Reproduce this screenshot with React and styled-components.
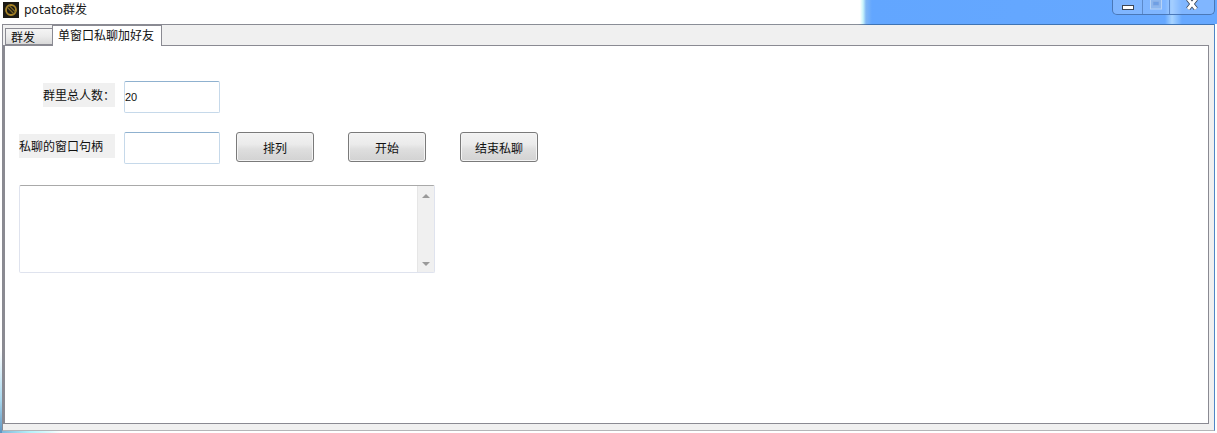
import React from 'react'
import styled, { createGlobalStyle } from 'styled-components'

const GlobalStyle = createGlobalStyle`
  html, body {
    margin: 0;
    padding: 0;
    background: #fff;
  }
  body {
    font-family: "Noto Sans CJK SC", "Liberation Sans", sans-serif;
    font-size: 12px;
    color: #111;
  }
`

const Page = styled.div`
  width: 1217px;
  height: 433px;
  overflow: hidden;
  display: flex;
  flex-direction: column;
  background:
    linear-gradient(to bottom, #fff 0, #fff 350px, #a9d8ee 400px, #5f94c0 100%) left top / 2px 100% no-repeat,
    linear-gradient(to right, #7fb4d8 0, #b5f2fb 30px, #d9fafd 48px, #fff 62px) left bottom / 100% 3px no-repeat,
    #fff;
`

const TitleBar = styled.header`
  height: 24px;
  flex: none;
  display: flex;
  justify-content: space-between;
  align-items: flex-start;
  padding: 2px 2px 0 3px;
  box-sizing: border-box;
  background:
    linear-gradient(to right, #fff 860px, #c8f4fb 863px, #7fb6f5 866px, #62a6ff 872px, #66a8ff 1165px, #a8d4ff 1172px, #66a8ff 1182px, #66a8ff 100%);
`

const TitleGroup = styled.div`
  display: flex;
  align-items: center;
  gap: 5px;
  height: 16px;
`

const TitleText = styled.span`
  font-family: "DejaVu Sans", "Noto Sans CJK SC", sans-serif;
  font-size: 12px;
  line-height: 16px;
  color: #1a1a1a;
`

const WindowButtons = styled.div`
  display: flex;
  height: 15px;
  margin-top: -2px;
  box-sizing: border-box;
  border: 1px solid #4a78b8;
  border-top: 0;
  border-radius: 0 0 5px 5px;
  background: rgba(160, 200, 255, 0.45);
`

const WindowButton = styled.div`
  width: ${props => props.$width}px;
  display: flex;
  justify-content: center;
  align-items: flex-start;
  box-sizing: border-box;
  border-left: ${props => props.$first ? '0' : '1px solid #5d8aca'};
`

const Frame = styled.div`
  margin-left: 2px;
  width: 1213px;
  height: 407px;
  flex: none;
  box-sizing: border-box;
  display: flex;
  flex-direction: column;
  background:
    linear-gradient(to right, #8a8a92 0, #8a8f98 855px, #3f74b4 865px, #3f74b4 100%) top / 100% 1px no-repeat,
    #f0f0f0;
  border-left: 1px solid #8a8a92;
  border-right: 1px solid #4f86c6;
  border-bottom: 1px solid #b5b5b8;
  padding: 1px 5px 6px 0;
`

const TabRow = styled.nav`
  height: 20px;
  flex: none;
  display: flex;
  align-items: flex-end;
  padding-left: 2px;
  position: relative;
  z-index: 1;
`

const Tab = styled.div`
  box-sizing: border-box;
  width: ${props => props.$active ? 110 : 47}px;
  height: ${props => props.$active ? 21 : 17}px;
  margin-bottom: ${props => props.$active ? -1 : 0}px;
  border: 1px solid #8a8a92;
  border-bottom: ${props => props.$active ? '0' : '1px solid #8a8a92'};
  border-right: ${props => props.$active ? '1px solid #8a8a92' : '0'};
  background: ${props => props.$active
    ? '#fff'
    : 'linear-gradient(to bottom, #f4f4f4 0, #ececec 45%, #d9d9d9 100%)'};
  line-height: ${props => props.$active ? 18 : 16}px;
  padding-left: 5px;
  font-size: 12px;
  white-space: nowrap;
`

const Panel = styled.main`
  flex: 1;
  background: #fff;
  border: 1px solid #8a8a92;
  border-left-width: 2px;
  box-sizing: border-box;
  padding: 35px 0 0 14px;
  display: flex;
  flex-direction: column;
`

const FormRow = styled.div`
  display: flex;
  align-items: flex-start;
  margin-bottom: ${props => props.$gap}px;
`

const FieldLabel = styled.label`
  width: 96px;
  display: flex;
  justify-content: flex-end;
  margin-top: 2px;
  margin-right: 9px;
  flex: none;
`

const LabelText = styled.span`
  display: block;
  box-sizing: border-box;
  width: ${props => props.$width}px;
  height: 24px;
  line-height: 24px;
  background: #f0f0f0;
  font-size: 12px;
  white-space: nowrap;
`

const TextInput = styled.input`
  width: 96px;
  height: ${props => props.$height}px;
  box-sizing: border-box;
  border: 1px solid #c6d9ea;
  border-top-color: #8fb1cf;
  border-radius: 2px;
  outline: none;
  padding: 0;
  font-family: "Liberation Sans", sans-serif;
  font-size: 11px;
  color: #111;
  background: #fff;
`

const ButtonRow = styled.div`
  display: flex;
  gap: 34px;
  margin-left: 16px;
`

const Button = styled.button`
  width: 78px;
  height: 30px;
  padding: 0;
  box-sizing: border-box;
  border: 1px solid #7a7a7a;
  border-radius: 3px;
  background: linear-gradient(to bottom, #f2f2f2 0, #ebebeb 40%, #dedede 58%, #d2d2d2 100%);
  box-shadow: inset 0 0 0 1px #f4f4f4;
  font-family: "Noto Sans CJK SC", sans-serif;
  font-size: 12px;
  color: #111;
`

const LogBox = styled.div`
  width: 416px;
  height: 88px;
  box-sizing: border-box;
  display: flex;
  border: 1px solid #dfe3ee;
  border-top-color: #a9a9a9;
  border-radius: 2px;
  background: #fff;
`

const LogArea = styled.div`
  flex: 1;
`

const ScrollTrack = styled.div`
  width: 16px;
  background: #f0f0f0;
  border-left: 1px solid #e6e6e6;
  display: flex;
  flex-direction: column;
  justify-content: space-between;
  align-items: center;
  padding: 8px 0 6px;
`

const ScrollArrow = styled.span`
  width: 0;
  height: 0;
  border-left: 4px solid transparent;
  border-right: 4px solid transparent;
  border-bottom: ${props => props.$down ? '0' : '4px solid #9a9a9a'};
  border-top: ${props => props.$down ? '4px solid #9a9a9a' : '0'};
`

const AppIcon = () => (
  <svg width="16" height="16" viewBox="0 0 16 16">
    <rect width="16" height="16" fill="#1c1a14" />
    <circle cx="8" cy="8" r="5" fill="none" stroke="#a98527" strokeWidth="1.8" />
    <path d="M4 5 L11 12 M6 3.5 L12.5 10" stroke="#7f6824" strokeWidth="1.1" />
  </svg>
)

const MinIcon = () => (
  <svg width="12" height="10" viewBox="0 0 12 10" style={{ marginTop: 5 }}>
    <rect x="0.5" y="0.5" width="11" height="4" fill="#fff" stroke="#3c4656" />
  </svg>
)

const MaxIcon = () => (
  <svg width="12" height="10" viewBox="0 0 12 10">
    <rect x="0.5" y="-1" width="11" height="10" fill="#8cb6ee" stroke="#b6d2f6" />
    <rect x="3" y="1.5" width="6" height="4" fill="#6f9fe4" stroke="#8fb2e4" strokeWidth="0.6" />
  </svg>
)

const CloseIcon = () => (
  <svg width="12" height="10" viewBox="0 0 12 10">
    <path d="M2 -1 L10 9 M10 -1 L2 9" stroke="#3c4656" strokeWidth="4.6" />
    <path d="M2 -1 L10 9 M10 -1 L2 9" stroke="#fff" strokeWidth="3" />
  </svg>
)

export default function App() {
  return (
    <>
      <GlobalStyle />
      <Page>
        <TitleBar>
          <TitleGroup>
            <AppIcon />
            <TitleText>potato群发</TitleText>
          </TitleGroup>
          <WindowButtons>
            <WindowButton $first $width={29}><MinIcon /></WindowButton>
            <WindowButton $width={27}><MaxIcon /></WindowButton>
            <WindowButton $width={45}><CloseIcon /></WindowButton>
          </WindowButtons>
        </TitleBar>
        <Frame>
          <TabRow>
            <Tab>群发</Tab>
            <Tab $active>单窗口私聊加好友</Tab>
          </TabRow>
          <Panel>
            <FormRow $gap={19}>
              <FieldLabel><LabelText $width={72}>群里总人数：</LabelText></FieldLabel>
              <TextInput $height={32} defaultValue="20" />
            </FormRow>
            <FormRow $gap={21}>
              <FieldLabel><LabelText $width={96}>私聊的窗口句柄</LabelText></FieldLabel>
              <TextInput $height={32} />
              <ButtonRow>
                <Button>排列</Button>
                <Button>开始</Button>
                <Button>结束私聊</Button>
              </ButtonRow>
            </FormRow>
            <LogBox>
              <LogArea />
              <ScrollTrack>
                <ScrollArrow />
                <ScrollArrow $down />
              </ScrollTrack>
            </LogBox>
          </Panel>
        </Frame>
      </Page>
    </>
  )
}
